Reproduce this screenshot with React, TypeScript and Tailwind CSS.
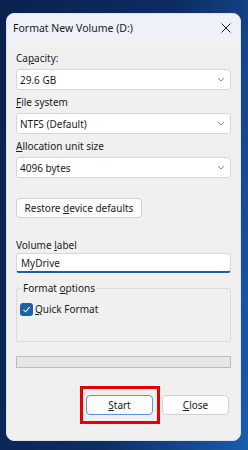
const Chevron = () => (
  <svg width="8" height="5" viewBox="0 0 8 5" className="shrink-0">
    <polyline points="1,1 4,4 7,1" fill="none" stroke="#8c8c8c" strokeWidth="1" />
  </svg>
);

const Combo = ({ value }: { value: string }) => (
  <div className="mt-[4px] h-[21px] flex items-center justify-between bg-white border border-[#d6d6d6] rounded-[3px] pl-[3px] pr-[5px]">
    <span>{value}</span>
    <Chevron />
  </div>
);

export default function App() {
  return (
    <div className="w-[248px] h-[450px] overflow-hidden pt-[13px] pl-[6px] bg-[linear-gradient(100deg,#0a2150_0%,#0d2d62_55%,#1a5cad_100%)] font-['Noto_Sans',sans-serif] text-[10px] leading-[14px] text-[#1b1b1b]">
      <div className="w-[235px] h-[428px] rounded-lg bg-[#f0f0f0] border border-[#dde1e8] overflow-hidden flex flex-col">
        {/* title bar */}
        <div className="h-[27px] shrink-0 bg-[#eef1f7] flex items-center justify-between pl-[6px] pr-[9px]">
          <span className="text-[10.5px]">Format New Volume (D:)</span>
          <svg width="10" height="10" viewBox="0 0 10 10">
            <path d="M0.5 0.5 L9.5 9.5 M9.5 0.5 L0.5 9.5" stroke="#1b1b1b" strokeWidth="1" />
          </svg>
        </div>

        <div className="flex flex-col px-[9px] pt-[10px]">
          <div>
            Ca<u className="underline-offset-1">p</u>acity:
          </div>
          <Combo value="29.6 GB" />

          <div className="mt-[5px]">
            <u className="underline-offset-1">F</u>ile system
          </div>
          <Combo value="NTFS (Default)" />

          <div className="mt-[5px]">
            <u className="underline-offset-1">A</u>llocation unit size
          </div>
          <Combo value="4096 bytes" />

          <button className="mt-[20px] w-[126px] h-[20px] bg-[#fdfdfd] border border-[#d2d2d2] rounded-[4px] text-center">
            Restore <u className="underline-offset-1">d</u>evice defaults
          </button>

          <div className="mt-[20px]">
            Volume <u className="underline-offset-1">l</u>abel
          </div>
          <div className="mt-[1px] h-[20px] flex items-center bg-white border border-[#d6d6d6] border-b-2 border-b-[#1a5fa8] rounded-[3px] pl-[4px]">
            MyDrive
          </div>

          <fieldset className="mt-[8px] border border-[#dadada] rounded-[2px] px-[4px] pb-[25px]">
            <legend className="px-[2px]">
              Format <u className="underline-offset-1">o</u>ptions
            </legend>
            <div className="mt-[7px] h-[14px] flex items-center gap-[2px] -ml-[1px]">
              <span className="w-[13px] h-[13px] rounded-[3px] bg-[#1c5fb0] flex items-center justify-center">
                <svg width="9" height="9" viewBox="0 0 9 9">
                  <polyline points="1.5,4.8 3.6,6.8 7.6,2.2" fill="none" stroke="#ffffff" strokeWidth="1.1" />
                </svg>
              </span>
              <span>
                <u className="underline-offset-1">Q</u>uick Format
              </span>
            </div>
          </fieldset>

          <div className="mt-[14px] h-[12px] bg-[#e6e6e6] border border-[#bcbcbc]" />

          <div className="mt-[27px] flex justify-end gap-[9px] pr-[2px]">
            <div className="relative">
              <button className="w-[67px] h-[20px] bg-[#fdfdfd] border border-[#5b95d9] rounded-[4px]">
                <u className="underline-offset-1">S</u>tart
              </button>
              <div className="absolute -left-[6px] -top-[9px] w-[80px] h-[38px] border-[3px] border-[#e60000] pointer-events-none" />
            </div>
            <button className="w-[67px] h-[20px] bg-[#fdfdfd] border border-[#d2d2d2] rounded-[4px]">
              <u className="underline-offset-1">C</u>lose
            </button>
          </div>
        </div>
      </div>
    </div>
  );
}
